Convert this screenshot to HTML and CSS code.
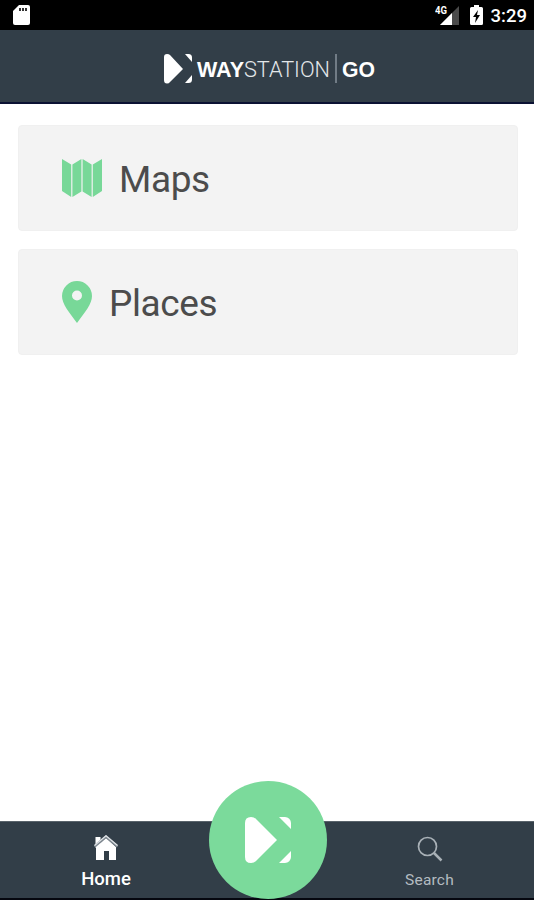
FILE: index.html
```
<!DOCTYPE html>
<html lang="en">
<head>
  <meta charset="utf-8">
  <title>Waystation Go</title>
  <link rel="stylesheet" href="styles.css">
</head>
<body>
  <div class="status-bar">
    <svg class="sd-icon" width="17" height="21" viewBox="0 0 17 21">
      <path d="M6 0h9a2 2 0 0 1 2 2v16a2 2 0 0 1-2 2H2a2 2 0 0 1-2-2V6z" fill="#fff"/>
      <path d="M7 3v3M10 3v3M13 3v3" stroke="#333" stroke-width="2"/>
    </svg>
    <div class="status-right">
      <svg class="signal-icon" width="25" height="22" viewBox="0 0 25 22">
        <path d="M24 1v19H5z" fill="#4a4a4a"/>
        <path d="M17 8v12H5z" fill="#fff"/>
        <text class="network" x="0" y="9" textLength="12" lengthAdjust="spacingAndGlyphs">4G</text>
      </svg>
      <svg class="battery-icon" width="13" height="21" viewBox="0 0 13 21">
        <path d="M4 0h5v2h2.500a1.500 1.500 0 0 1 1.500 1.500v15a1.500 1.500 0 0 1-1.500 1.500h-10A1.500 1.500 0 0 1 0 18.500v-15A1.500 1.500 0 0 1 1.500 2H4z" fill="#fff"/>
        <path d="M8 5L3 12h3l-1 6 5-8H7z" fill="#000"/>
      </svg>
      <span class="clock">3:29</span>
    </div>
  </div>

  <div class="header">
    <svg class="logo" width="214" height="32" viewBox="0 0 214 32">
      <path d="M1 4Q1 1 4 1q2 0 3 1l13 14L7 29q-1 1.500-3 1.500Q1 30.500 1 27z" fill="#fff"/>
      <path d="M22 1h3.500a3.500 3.500 0 0 1 3.500 3.500V9zM22 30h3.500a3.500 3.500 0 0 0 3.500-3.500V22z" fill="#fff"/>
      <text class="logo-bold" x="34" y="23.500" textLength="47" lengthAdjust="spacingAndGlyphs">WAY</text>
      <text class="logo-light" x="81" y="23.500" textLength="86" lengthAdjust="spacingAndGlyphs">STATION</text>
      <path d="M173 1v29" stroke="#87929b" stroke-width="1.500"/>
      <text class="logo-bold" x="179" y="23.500" textLength="33" lengthAdjust="spacingAndGlyphs">GO</text>
    </svg>
  </div>

  <div class="content">
    <div class="card">
      <svg class="card-icon" width="40" height="40" viewBox="0 0 40 40">
        <path d="M0 1l9.200 5.500v32.500L0 33zM10.400 6.500L19.400 1v32.500l-9 5.500zM20.600 1l9 5.500v32.500l-9-5.500zM30.800 6.500L40 1v32l-9.200 6z" fill="#78d898"/>
      </svg>
      <span class="card-label">Maps</span>
    </div>
    <div class="card">
      <svg class="card-icon" width="30" height="44" viewBox="0 0 30 44">
        <path d="M15 1a15 15 0 0 0-15 15c0 8 7 16 15 27 8-11 15-19 15-27A15 15 0 0 0 15 1zm0 9.500a5 5 0 1 1 0 10 5 5 0 0 1 0-10z" fill="#78d898"/>
      </svg>
      <span class="card-label">Places</span>
    </div>
  </div>

  <div class="tab-bar">
    <div class="tab tab-active">
      <svg class="home-icon" width="24" height="26" viewBox="0 0 24 26">
        <path d="M1.500 2h5v7l-5 4z" fill="#fff"/>
        <path d="M12 3l10 9v13h-7v-9h-5v9H2V12z" fill="#fff"/>
        <path d="M.5 11.500L12 1.500l11.500 10" fill="none" stroke="#7d878f" stroke-width="2.500"/>
        <path d="M.5 10.500L12 .8l11.500 9.700" fill="none" stroke="#dfe3e6" stroke-width="1.300"/>
      </svg>
      <span class="tab-label">Home</span>
    </div>
    <div class="tab tab-search">
      <svg class="search-icon" width="26" height="26" viewBox="0 0 26 26" fill="none" stroke="#a9b1b7">
        <circle cx="10.500" cy="10.500" r="9" stroke-width="1.700"/>
        <path d="M17 17l7.500 7.500" stroke-width="2.500"/>
      </svg>
      <span class="tab-label">Search</span>
    </div>
    <div class="go-button">
      <svg width="46" height="46" viewBox="0 0 46 46" fill="#fff">
        <path d="M0 6Q0 0 6 0q3 0 5 2l21 21-21 21q-2 2-5 2-6 0-6-6zM34 0h6a6 6 0 0 1 6 6v6zM34 46h6a6 6 0 0 0 6-6v-6z"/>
      </svg>
    </div>
  </div>
</body>
</html>
```
FILE: styles.css
```
* {
  box-sizing: border-box;
}

body {
  display: flex;
  flex-direction: column;
  height: 900px;
  margin: 0;
  overflow: hidden;
  background: #fff;
  font-family: Roboto, sans-serif;
}

.status-bar {
  display: flex;
  justify-content: space-between;
  height: 30px;
  padding: 5px 7px 0 13px;
  background: #000;
}

.status-right {
  display: flex;
}

.signal-icon {
  margin-right: 10px;
}

.network {
  fill: #fff;
  font-size: 10px;
  font-weight: 700;
}

.battery-icon {
  margin-right: 8px;
}

.clock {
  color: #fff;
  font-size: 18.5px;
  font-weight: 500;
  line-height: 23px;
}

.header {
  display: flex;
  justify-content: center;
  height: 74px;
  padding-top: 23px;
  padding-left: 6px;
  border-bottom: 2px solid #0b1233;
  background: #323e48;
}

.logo-bold,
.logo-light {
  fill: #fff;
  font-family: "Liberation Sans", sans-serif;
  font-size: 22px;
  font-weight: 700;
}

.logo-light {
  fill: #e3e7ea;
  font-family: Roboto, sans-serif;
  font-weight: 300;
}

.content {
  display: flex;
  flex: 1;
  flex-direction: column;
  gap: 18px;
  padding: 21px 16px 0 18px;
}

.card {
  display: flex;
  align-items: center;
  height: 106px;
  padding-left: 43px;
  border: 1px solid #f0f0f0;
  border-radius: 4px;
  background: #f3f3f3;
}

.card-icon {
  margin-right: 17px;
}

.card-label {
  padding-top: 4px;
  color: #4c4c4c;
  font-size: 37px;
  letter-spacing: -0.4px;
  line-height: 44px;
}

.tab-bar {
  position: relative;
  display: flex;
  justify-content: space-between;
  height: 79px;
  border-top: 1px solid #59636b;
  border-bottom: 2px solid #05070f;
  background: #323e48;
}

.tab {
  display: flex;
  flex-direction: column;
  align-items: center;
  width: 212px;
  padding-top: 13px;
}

.tab-search {
  width: 209px;
  padding-top: 14px;
}

.tab-label {
  margin-top: 8px;
  color: #b4bbc0;
  font-size: 15.5px;
  letter-spacing: 0.2px;
  line-height: 20px;
}

.tab-active .tab-label {
  margin-top: 7px;
  color: #fff;
  font-size: 18.5px;
  font-weight: 500;
  letter-spacing: 0;
  line-height: 22px;
}

/* floating button over the tab bar */
.go-button {
  position: absolute;
  bottom: -1px;
  left: 209px;
  display: flex;
  align-items: center;
  justify-content: center;
  width: 118px;
  height: 118px;
  border-radius: 50%;
  background: #7bda9b;
}
```
